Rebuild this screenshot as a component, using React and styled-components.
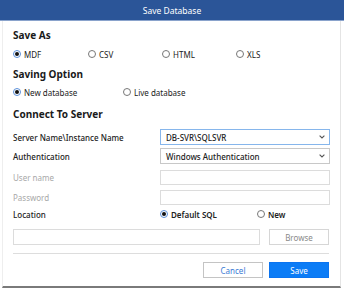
import React from 'react';
import styled, { createGlobalStyle } from 'styled-components';

const GlobalStyle = createGlobalStyle`
  html, body { margin: 0; padding: 0; background: #fff; }
  body { font-family: "Noto Sans", "Open Sans", sans-serif; }
`;

const Window = styled.div`
  width: 344px;
  height: 288px;
  display: flex;
  flex-direction: column;
  background: #fff;
  box-sizing: border-box;
  overflow: hidden;
`;

const TitleBar = styled.div`
  height: 20px;
  flex: none;
  background: #2b5598;
  color: #fff;
  font-size: 8.5px;
  display: flex;
  align-items: center;
  justify-content: center;
  border-bottom: 1px solid #8aa3cc;
`;

const Body = styled.div`
  flex: 1;
  margin: 0 3px 0 2px;
  padding: 0 10px 0 10px;
  border-left: 1px solid #eeeeee;
  border-right: 1px solid #e4e4e4;
  border-bottom: 2px solid #7a7a7a;
  display: flex;
  flex-direction: column;
`;

const Heading = styled.div`
  font-size: 10px;
  font-weight: 700;
  color: #1a1a1a;
  height: 14px;
  line-height: 14px;
  margin-top: ${(p) => p.$top || 0}px;
`;

const RadioRow = styled.div`
  display: grid;
  grid-template-columns: ${(p) => p.$cols};
  align-items: center;
  height: 12px;
  margin-top: ${(p) => p.$top || 0}px;
`;

const RadioLabel = styled.label`
  display: flex;
  align-items: center;
  gap: 3px;
  font-size: 8px;
  color: #222;
  font-weight: ${(p) => (p.$bold ? 600 : 400)};
`;

const Circle = styled.span`
  width: 8px;
  height: 8px;
  box-sizing: border-box;
  border-radius: 50%;
  border: 1px solid ${(p) => (p.$checked ? '#5a8fd8' : '#777')};
  display: flex;
  align-items: center;
  justify-content: center;
  &::after {
    content: '';
    width: 4px;
    height: 4px;
    border-radius: 50%;
    background: ${(p) => (p.$checked ? '#111' : 'transparent')};
  }
`;

const Radio = ({ checked, bold, children }) => (
  <RadioLabel $bold={bold}>
    <Circle $checked={checked} />
    {children}
  </RadioLabel>
);

const FormRow = styled.div`
  display: grid;
  grid-template-columns: 147px 170px;
  align-items: center;
  height: 16px;
  margin-top: ${(p) => p.$top || 0}px;
`;

const Label = styled.span`
  font-size: 8px;
  color: ${(p) => (p.$muted ? '#a8a8a8' : '#222')};
  font-weight: ${(p) => (p.$muted ? 400 : 500)};
`;

const Select = styled.div`
  height: 16px;
  box-sizing: border-box;
  border: 1px solid ${(p) => (p.$focus ? '#86b6ec' : '#c8c8c8')};
  display: flex;
  align-items: center;
  justify-content: space-between;
  padding: 0 4px 0 5px;
  font-size: 8px;
  color: #222;
  font-weight: 500;
`;

const Input = styled.div`
  height: ${(p) => p.$h || 15}px;
  box-sizing: border-box;
  border: 1px solid #dcdcdc;
  background: #fff;
`;

const PathRow = styled.div`
  display: grid;
  grid-template-columns: 247px 60px;
  column-gap: 9px;
  margin-top: 7px;
`;

const Button = styled.div`
  height: 16px;
  box-sizing: border-box;
  display: flex;
  align-items: center;
  justify-content: center;
  font-size: 8px;
  border: 1px solid ${(p) => p.$border};
  background: ${(p) => p.$bg};
  color: ${(p) => p.$color};
`;

const Separator = styled.div`
  height: 1px;
  width: 316px;
  background: #dddddd;
  margin-top: 8px;
`;

const Footer = styled.div`
  display: flex;
  justify-content: flex-end;
  gap: 6px;
  width: 316px;
  margin-top: 8px;
`;

const ButtonSlot = styled.div`
  width: ${(p) => p.$w}px;
`;

const Chevron = () => (
  <svg width="6" height="4" viewBox="0 0 6 4">
    <path d="M0.6 0.6 L3 3 L5.4 0.6" fill="none" stroke="#555" strokeWidth="1.1" />
  </svg>
);

export default function App() {
  return (
    <>
      <GlobalStyle />
      <Window>
        <TitleBar>Save Database</TitleBar>
        <Body>
          <Heading $top={7}>Save As</Heading>
          <RadioRow $top={6} $cols="75px 74px 74px 1fr">
            <Radio checked>MDF</Radio>
            <Radio>CSV</Radio>
            <Radio>HTML</Radio>
            <Radio>XLS</Radio>
          </RadioRow>
          <Heading $top={7}>Saving Option</Heading>
          <RadioRow $top={5} $cols="110px 1fr">
            <Radio checked>New database</Radio>
            <Radio>Live database</Radio>
          </RadioRow>
          <Heading $top={9}>Connect To Server</Heading>
          <FormRow $top={8}>
            <Label>Server Name\Instance Name</Label>
            <Select $focus>
              DB-SVR\SQLSVR
              <Chevron />
            </Select>
          </FormRow>
          <FormRow $top={3}>
            <Label>Authentication</Label>
            <Select>
              Windows Authentication
              <Chevron />
            </Select>
          </FormRow>
          <FormRow $top={5}>
            <Label $muted>User name</Label>
            <Input />
          </FormRow>
          <FormRow $top={4}>
            <Label $muted>Password</Label>
            <Input />
          </FormRow>
          <FormRow $top={1}>
            <Label>Location</Label>
            <RadioRow $cols="97px 1fr">
              <Radio checked bold>Default SQL</Radio>
              <Radio bold>New</Radio>
            </RadioRow>
          </FormRow>
          <PathRow>
            <Input $h={16} />
            <Button $border="#d6d6d6" $bg="#fff" $color="#8a8a8a">Browse</Button>
          </PathRow>
          <Separator />
          <Footer>
            <ButtonSlot $w={60}>
              <Button $border="#c4c4c4" $bg="#fff" $color="#3a7bd5">Cancel</Button>
            </ButtonSlot>
            <ButtonSlot $w={60}>
              <Button $border="#0b74f0" $bg="#0b7cf6" $color="#fff">Save</Button>
            </ButtonSlot>
          </Footer>
        </Body>
      </Window>
    </>
  );
}
